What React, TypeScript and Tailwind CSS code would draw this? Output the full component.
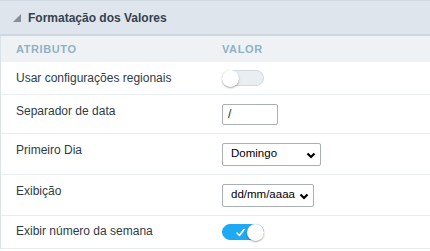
import React from 'react';

const font = { fontFamily: '"Liberation Sans", Arial, sans-serif' };

const Toggle: React.FC<{ on?: boolean }> = ({ on = false }) => (
    <div className={`relative w-[42px] h-[16px] rounded-full border ${on ? 'bg-[#1fa8f4] border-[#1fa8f4]' : 'bg-[#e9eef2] border-[#d3dae0]'}`}>
        {on && (
            <svg className="absolute left-[13px] top-[3px]" width="9" height="9" viewBox="0 0 9 9">
                <path d="M1 5 L3.5 7.5 L8 1.5" fill="none" stroke="white" strokeWidth="1.6" strokeLinecap="round" strokeLinejoin="round" />
            </svg>
        )}
        <span className={`absolute top-[-1px] w-[17px] h-[17px] rounded-full bg-white shadow-[0_1px_2px_rgba(0,0,0,0.35)] ${on ? 'right-[-1px]' : 'left-[-1px]'}`} />
    </div>
);

const Select: React.FC<{ value: string; width: string }> = ({ value, width }) => (
    <div className={`relative h-[23px] ${width} border border-[#a9afb5] rounded-[2px] bg-white flex items-center pl-[8px] text-[11.5px] text-black`}>
        {value}
        <svg className="absolute right-[4px] top-[8px]" width="10" height="7" viewBox="0 0 10 7">
            <path d="M1.5 1.5 L5 5 L8.5 1.5" fill="none" stroke="black" strokeWidth="2.2" />
        </svg>
    </div>
);

const rows = [
    { label: 'Usar configurações regionais', h: 'h-[33px]', pt: 'pt-[8px]', control: <Toggle /> },
    { label: 'Separador de data', h: 'h-[39px]', pt: 'pt-[8px]', control: (
        <div className="w-[56px] h-[21px] border border-[#a9afb5] rounded-[2px] flex items-center pl-[5px] text-[12px] text-[#222]">/</div>
    ) },
    { label: 'Primeiro Dia', h: 'h-[41px]', pt: 'pt-[8px]', control: <Select value="Domingo" width="w-[99px]" /> },
    { label: 'Exibição', h: 'h-[41px]', pt: 'pt-[8px]', control: <Select value="dd/mm/aaaa" width="w-[92px]" /> },
    { label: 'Exibir número da semana', h: 'h-[33px]', pt: 'pt-[7px]', control: <Toggle on /> },
];

export default function App() {
    return (
        <div className="w-[430px] h-[251px] bg-white overflow-hidden" style={font}>
            <div className="h-[36px] bg-[#dfe5ec] border-t border-[#d0d9e0] border-b-2 border-b-[#cfd8df] flex items-center pl-[13px] gap-[7px]">
                <svg width="8" height="8" viewBox="0 0 8 8">
                    <path d="M8 0 L8 8 L0 8 Z" fill="#868e96" />
                </svg>
                <span className="text-[12px] font-bold text-[#34424f]">Formatação dos Valores</span>
            </div>
            <div className="border-l border-[#dbe2e8]">
                <div className="h-[26px] bg-[#eef2f5] flex items-center text-[11px] font-bold tracking-[0.6px] text-[#8fb1c6]">
                    <span className="w-[221px] pl-[15px]">ATRIBUTO</span>
                    <span>VALOR</span>
                </div>
                {rows.map(r => (
                    <div key={r.label} className={`flex ${r.h} border-b border-[#e8edf1]`}>
                        <div className={`w-[221px] pl-[15px] ${r.pt} text-[12px] leading-[16px] text-[#2f3b47]`}>{r.label}</div>
                        <div className="flex items-center">{r.control}</div>
                    </div>
                ))}
            </div>
        </div>
    );
}
